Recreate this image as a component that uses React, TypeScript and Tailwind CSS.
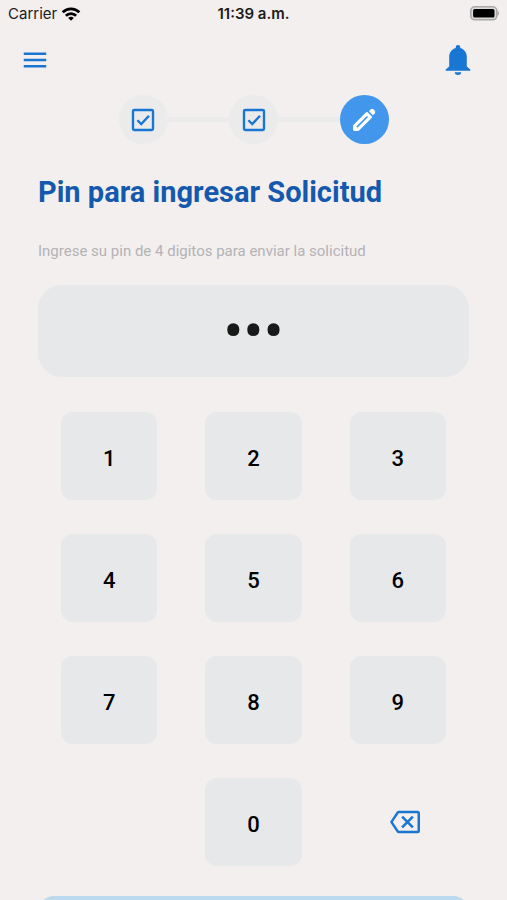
import React, { useState } from 'react';
import { MdMenu } from 'react-icons/md';

const steps = [
  { id: 'datos', label: 'Datos', done: true },
  { id: 'detalle', label: 'Detalle', done: true },
  { id: 'pin', label: 'Pin', done: false },
];

const digits = ['1', '2', '3', '4', '5', '6', '7', '8', '9'];

function StatusBar() {
  return (
    <div className="grid grid-cols-3 items-center h-7 px-2 font-['Inter',sans-serif] text-[#1c1c1c]">
      <div className="flex items-center gap-1">
        <span className="text-[15px] leading-5">Carrier</span>
        <svg width="20" height="14" viewBox="0 0 20 14" fill="none" stroke="#000" strokeWidth="2.8" aria-hidden="true">
          <path d="M1.7 5.3a11.8 11.8 0 0 1 16.6 0" />
          <path d="M4.9 8.7a7.2 7.2 0 0 1 10.2 0" />
          <path d="M10 13.8 7.2 11a4 4 0 0 1 5.6 0z" fill="#000" stroke="none" />
        </svg>
      </div>
      <span className="text-center text-[15px] leading-5 font-semibold">11:39 a.m.</span>
      <svg className="justify-self-end" width="30" height="16" viewBox="0 0 30 16" aria-hidden="true">
        <rect x="1.8" y="0.8" width="26" height="13" rx="4" fill="#dddbdb" stroke="#aaa8a8" strokeWidth="1.6" />
        <rect x="4.1" y="3.1" width="21.4" height="8.4" rx="1.6" fill="#000" />
        <path d="M28.6 4.8c2 .8 2 4.2 0 5z" fill="#a9a7a7" />
      </svg>
    </div>
  );
}

function BellIcon() {
  return (
    <svg width="26" height="32" viewBox="0 0 26 32" fill="#1976d2" aria-hidden="true">
      <path d="M13 1a2.3 2.3 0 0 0-2.3 2.3v.8C6.8 5.2 4.2 8.6 4.2 13v9.5L.7 25.5v1.3h24.6v-1.3l-3.5-3V13c0-4.400-2.600-7.800-6.500-8.900v-.8A2.300 2.300 0 0 0 13 1z" />
      <path d="M9.8 28.3h6.4a3.2 2.7 0 0 1-6.4 0z" />
    </svg>
  );
}

function CheckIcon() {
  return (
    <svg width="30" height="30" viewBox="0 0 24 24" fill="none" stroke="#1976d2" strokeWidth="1.9" aria-hidden="true">
      <rect x="4" y="4" width="16" height="16" rx="1" />
      <path d="m7.5 12.2 3.1 3.100 6.200-6.700" />
    </svg>
  );
}

function PencilIcon() {
  return (
    <svg width="30" height="30" viewBox="0 0 24 24" aria-hidden="true">
      <path d="M4.200 19.800v-3.200L14.300 6.500l3.200 3.200L7.400 19.800z" fill="#fff" stroke="#fff" strokeWidth="1.800" strokeLinejoin="round" />
      <path d="M6.300 17.700 14.800 9.200" stroke="#4296ec" strokeWidth="1.300" />
      <path d="m16 4.900 1.300-1.300a1.700 1.700 0 0 1 2.400 0l.8.8a1.700 1.700 0 0 1 0 2.400l-1.300 1.300z" fill="#fff" />
    </svg>
  );
}

function BackspaceIcon() {
  return (
    <svg width="30" height="30" viewBox="0 0 24 24" fill="#1976d2" aria-hidden="true">
      <path d="M19 15.590 17.590 17 14 13.410 10.410 17 9 15.590 12.590 12 9 8.410 10.410 7 14 10.590 17.590 7 19 8.410 15.410 12zM22 3a2 2 0 0 1 2 2v14a2 2 0 0 1-2 2H7c-.690 0-1.230-.360-1.590-.890L0 12l5.410-8.120C5.770 3.350 6.310 3 7 3zm0 2H7l-4.720 7L7 19h15z" />
    </svg>
  );
}

function Stepper() {
  return (
    <ol className="flex items-center mx-auto w-[270px]">
      {steps.map((step, index) => (
        <React.Fragment key={step.id}>
          {index > 0 && <li aria-hidden="true" className="flex-1 h-[5px] bg-[#ecebeb]" />}
          <li
            aria-label={step.label}
            className={
              step.done
                ? 'flex items-center justify-center size-[49px] rounded-full bg-[#ebebec]'
                : 'flex items-center justify-center size-[49px] rounded-full bg-[#4296ec]'
            }
          >
            {step.done ? <CheckIcon /> : <PencilIcon />}
          </li>
        </React.Fragment>
      ))}
    </ol>
  );
}

export default function App() {
  const [pin, setPin] = useState('123');

  const press = (digit: string) => setPin((prev) => (prev.length < 4 ? prev + digit : prev));

  const keyClass = 'h-[88px] rounded-xl bg-[#e6e8e9] pt-1.5 text-[22px] leading-7 font-medium text-black';

  return (
    <div className="h-screen overflow-y-auto [scrollbar-width:none] bg-[#f2efee] font-['Roboto',sans-serif]">
      <StatusBar />

      <header className="flex items-center justify-between pl-5 pr-9 h-16">
        <button type="button" aria-label="Menú">
          <MdMenu size={30} color="#1976d2" />
        </button>
        <button type="button" aria-label="Notificaciones">
          <BellIcon />
        </button>
      </header>

      <main className="px-[38px] pt-[3px]">
        <Stepper />

        <h1 className="mt-7 text-[29px] leading-10 font-bold text-[#1459ad]">Pin para ingresar Solicitud</h1>

        <label htmlFor="pin" className="block mt-[29px] text-[15px] leading-5 text-[#b4b3b5]">
          Ingrese su pin de 4 digitos para enviar la solicitud
        </label>
        <input
          id="pin"
          type="password"
          maxLength={4}
          value={pin}
          onChange={(e) => setPin(e.target.value)}
          className="block mt-6 w-full h-[92px] rounded-3xl bg-[#e6e8e9] text-center text-[60px] text-[#181a1a] outline-none"
        />

        {/* Keypad */}
        <div className="grid grid-cols-3 gap-x-12 gap-y-[34px] mt-[35px] px-[23px]">
          {digits.map((digit) => (
            <button key={digit} type="button" onClick={() => press(digit)} className={keyClass}>
              {digit}
            </button>
          ))}
          <button type="button" onClick={() => press('0')} className={`col-start-2 ${keyClass}`}>
            0
          </button>
          <button
            type="button"
            aria-label="Borrar"
            onClick={() => setPin((prev) => prev.slice(0, -1))}
            className="flex items-center justify-center pl-3.5"
          >
            <BackspaceIcon />
          </button>
        </div>

        <button type="submit" aria-label="Enviar" disabled className="block mt-[30px] mb-8 w-full h-14 rounded-2xl bg-[#bbdaf0]" />
      </main>
    </div>
  );
}
